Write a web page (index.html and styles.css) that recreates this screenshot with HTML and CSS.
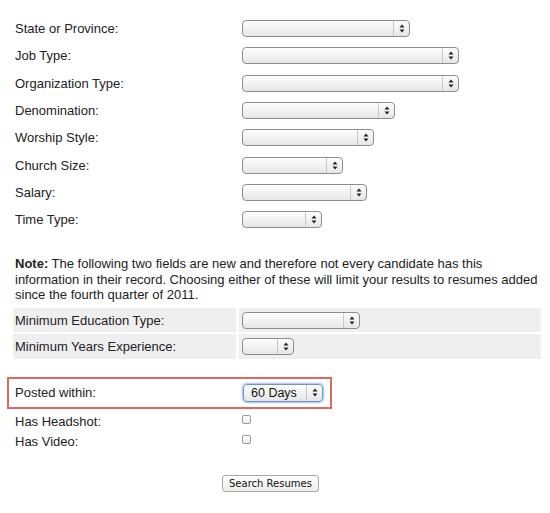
FILE: index.html
```html
<!DOCTYPE html>
<html>
<head>
<meta charset="utf-8">
<link rel="stylesheet" href="styles.css">
</head>
<body>
<div class="page">
  <div class="fields">
    <div class="row"><span class="label">State or Province:</span><span class="sel w168"><span class="val"></span><span class="arr"><svg width="6" height="9" viewBox="0 0 6 9"><polygon points="0.5,3.6 3,0.6 5.5,3.6"/><polygon points="0.5,5.4 5.5,5.4 3,8.4"/></svg></span></span></div>
    <div class="row"><span class="label">Job Type:</span><span class="sel w217"><span class="val"></span><span class="arr"><svg width="6" height="9" viewBox="0 0 6 9"><polygon points="0.5,3.6 3,0.6 5.5,3.6"/><polygon points="0.5,5.4 5.5,5.4 3,8.4"/></svg></span></span></div>
    <div class="row"><span class="label">Organization Type:</span><span class="sel w217"><span class="val"></span><span class="arr"><svg width="6" height="9" viewBox="0 0 6 9"><polygon points="0.5,3.6 3,0.6 5.5,3.6"/><polygon points="0.5,5.4 5.5,5.4 3,8.4"/></svg></span></span></div>
    <div class="row"><span class="label">Denomination:</span><span class="sel w153"><span class="val"></span><span class="arr"><svg width="6" height="9" viewBox="0 0 6 9"><polygon points="0.5,3.6 3,0.6 5.5,3.6"/><polygon points="0.5,5.4 5.5,5.4 3,8.4"/></svg></span></span></div>
    <div class="row"><span class="label">Worship Style:</span><span class="sel w132"><span class="val"></span><span class="arr"><svg width="6" height="9" viewBox="0 0 6 9"><polygon points="0.5,3.6 3,0.6 5.5,3.6"/><polygon points="0.5,5.4 5.5,5.4 3,8.4"/></svg></span></span></div>
    <div class="row"><span class="label">Church Size:</span><span class="sel w101"><span class="val"></span><span class="arr"><svg width="6" height="9" viewBox="0 0 6 9"><polygon points="0.5,3.6 3,0.6 5.5,3.6"/><polygon points="0.5,5.4 5.5,5.4 3,8.4"/></svg></span></span></div>
    <div class="row"><span class="label">Salary:</span><span class="sel w125"><span class="val"></span><span class="arr"><svg width="6" height="9" viewBox="0 0 6 9"><polygon points="0.5,3.6 3,0.6 5.5,3.6"/><polygon points="0.5,5.4 5.5,5.4 3,8.4"/></svg></span></span></div>
    <div class="row"><span class="label">Time Type:</span><span class="sel w80"><span class="val"></span><span class="arr"><svg width="6" height="9" viewBox="0 0 6 9"><polygon points="0.5,3.6 3,0.6 5.5,3.6"/><polygon points="0.5,5.4 5.5,5.4 3,8.4"/></svg></span></span></div>
  </div>

  <p class="note"><span class="note-key">Note:</span> The following two fields are new and therefore not every candidate has this information in their record. Choosing either of these will limit your results to resumes added since the fourth quarter of 2011.</p>

  <div class="grey-table">
    <div class="cell lcell">Minimum Education Type:</div>
    <div class="cell rcell"><span class="sel w118"><span class="val"></span><span class="arr"><svg width="6" height="9" viewBox="0 0 6 9"><polygon points="0.5,3.6 3,0.6 5.5,3.6"/><polygon points="0.5,5.4 5.5,5.4 3,8.4"/></svg></span></span></div>
    <div class="cell lcell">Minimum Years Experience:</div>
    <div class="cell rcell"><span class="sel w52"><span class="val"></span><span class="arr"><svg width="6" height="9" viewBox="0 0 6 9"><polygon points="0.5,3.6 3,0.6 5.5,3.6"/><polygon points="0.5,5.4 5.5,5.4 3,8.4"/></svg></span></span></div>
  </div>

  <div class="posted">
    <span class="label plabel">Posted within:</span>
    <span class="sel w80 focus"><span class="val">60 Days</span><span class="arr"><svg width="6" height="9" viewBox="0 0 6 9"><polygon points="0.5,3.6 3,0.6 5.5,3.6"/><polygon points="0.5,5.4 5.5,5.4 3,8.4"/></svg></span></span>
  </div>

  <div class="crow first"><span class="label">Has Headshot:</span><span class="check"></span></div>
  <div class="crow"><span class="label">Has Video:</span><span class="check"></span></div>

  <div class="actions"><button class="btn">Search Resumes</button></div>
</div>
</body>
</html>
```

FILE: styles.css
```css
html, body {
  margin: 0;
  padding: 0;
  background: #ffffff;
}
body {
  font-family: "Liberation Sans", Arial, sans-serif;
  font-size: 13px;
  color: #222222;
}
.page {
  width: 550px;
  padding-top: 15px;
}
.fields {
  padding-left: 15px;
}
.row {
  display: flex;
  align-items: center;
  height: 27.3px;
}
.label {
  width: 227px;
  flex: none;
  line-height: 15px;
}
.sel {
  display: inline-flex;
  box-sizing: border-box;
  height: 17px;
  border: 1px solid #8d8d8d;
  border-radius: 4px;
  background: linear-gradient(#fdfdfd 0%, #f1f1f1 55%, #e6e6e6 100%);
  box-shadow: inset 0 1px 0 #ffffff;
  flex: none;
}
.sel .val {
  flex: 1;
  font-size: 12px;
  line-height: 15px;
  padding-left: 7px;
  color: #111111;
}
.sel .arr {
  width: 15px;
  border-left: 1px solid #c8c8c8;
  display: flex;
  align-items: center;
  justify-content: center;
}
.sel .arr svg {
  display: block;
  fill: #222222;
}
.w168 { width: 168px; }
.w217 { width: 217px; }
.w153 { width: 153px; }
.w132 { width: 132px; }
.w101 { width: 101px; }
.w125 { width: 125px; }
.w80 { width: 80px; }
.w118 { width: 118px; }
.w52 { width: 52px; }

.note {
  margin: 23px 0 0 15px;
  width: 530px;
  line-height: 15.5px;
}
.note-key {
  font-weight: bold;
}
.grey-table {
  display: grid;
  grid-template-columns: 223px 302px;
  gap: 2px 3px;
  margin: 5px 0 0 13px;
}
.cell {
  background: #efefef;
  display: flex;
  align-items: center;
  height: 24.5px;
}
.lcell {
  padding-left: 2px;
}
.rcell {
  padding-left: 3px;
}
.posted {
  display: flex;
  align-items: center;
  box-sizing: border-box;
  width: 325px;
  height: 32px;
  margin: 18px 0 0 7px;
  padding-left: 6px;
  border: 2px solid #dc6b5f;
}
.plabel {
  width: 228px;
}
.sel.focus {
  border-color: #6f96c2;
  box-shadow: 0 0 2px 1px #9cc0e8, inset 0 1px 0 #ffffff;
  height: 18px;
}
.sel.focus .val {
  font-size: 12.5px;
  line-height: 16px;
}
.crow {
  display: flex;
  align-items: center;
  height: 20px;
  padding-left: 15px;
}
.crow.first {
  margin-top: 3px;
}
.check {
  width: 9px;
  height: 9px;
  box-sizing: border-box;
  border: 1px solid #9c9c9c;
  border-radius: 2px;
  background: linear-gradient(#ffffff, #e9e9e9);
  margin-top: -5px;
}
.actions {
  padding: 23px 0 0 222px;
}
.btn {
  font-family: "DejaVu Sans", sans-serif;
  font-size: 10px;
  height: 17px;
  padding: 0 6px;
  border: 1px solid #a8a8a8;
  border-radius: 3px;
  background: linear-gradient(#ffffff, #ececec);
  color: #111111;
  line-height: 14px;
}
```
